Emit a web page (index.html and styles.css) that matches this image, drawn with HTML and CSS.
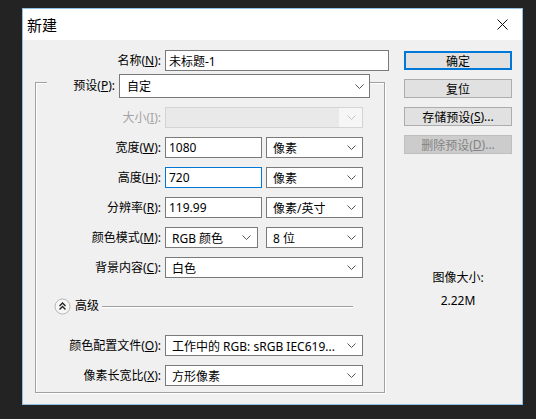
FILE: index.html
```html
<!DOCTYPE html>
<html lang="zh-CN">
<head>
<meta charset="utf-8">
<title>新建</title>
<link rel="stylesheet" href="styles.css">
</head>
<body>
<div class="dialog">
  <div class="titlebar">
    <span class="title">新建</span>
    <svg class="close" width="11" height="11" viewBox="0 0 11 11"><path d="M0.5 0.5 L10.5 10.5 M10.5 0.5 L0.5 10.5" stroke="#111" stroke-width="1" fill="none"/></svg>
  </div>
  <div class="content">
    <div class="main">
      <div class="name-row">
        <span class="lbl name-lbl">名称(<u>N</u>):</span>
        <div class="box input name-input">未标题-1</div>
      </div>
      <div class="group">
        <div class="preset-row">
          <span class="lbl preset-lbl">预设(<u>P</u>):</span>
          <div class="box select preset-sel"><span>自定</span><svg class="chev" width="9" height="5" viewBox="0 0 9 5"><polyline points="0.5,0.5 4.5,4.5 8.5,0.5" fill="none" stroke="#555" stroke-width="1"/></svg></div>
        </div>

        <div class="frow first">
          <span class="lbl disabled-lbl">大小(<u>I</u>):</span>
          <div class="box disabled w-full"><span class="dis-main"></span><span class="dd"><svg class="chev" width="9" height="5" viewBox="0 0 9 5"><polyline points="0.5,0.5 4.5,4.5 8.5,0.5" fill="none" stroke="#c4c4c4" stroke-width="1"/></svg></span></div>
        </div>

        <div class="frow">
          <span class="lbl">宽度(<u>W</u>):</span>
          <div class="box input w-num">1080</div>
          <div class="box select w-unit"><span>像素</span><svg class="chev" width="9" height="5" viewBox="0 0 9 5"><polyline points="0.5,0.5 4.5,4.5 8.5,0.5" fill="none" stroke="#555" stroke-width="1"/></svg></div>
        </div>

        <div class="frow">
          <span class="lbl">高度(<u>H</u>):</span>
          <div class="box input w-num focus">720</div>
          <div class="box select w-unit"><span>像素</span><svg class="chev" width="9" height="5" viewBox="0 0 9 5"><polyline points="0.5,0.5 4.5,4.5 8.5,0.5" fill="none" stroke="#555" stroke-width="1"/></svg></div>
        </div>

        <div class="frow">
          <span class="lbl">分辨率(<u>R</u>):</span>
          <div class="box input w-num">119.99</div>
          <div class="box select w-unit"><span>像素/英寸</span><svg class="chev" width="9" height="5" viewBox="0 0 9 5"><polyline points="0.5,0.5 4.5,4.5 8.5,0.5" fill="none" stroke="#555" stroke-width="1"/></svg></div>
        </div>

        <div class="frow">
          <span class="lbl">颜色模式(<u>M</u>):</span>
          <div class="box select w-mode"><span>RGB 颜色</span><svg class="chev" width="9" height="5" viewBox="0 0 9 5"><polyline points="0.5,0.5 4.5,4.5 8.5,0.5" fill="none" stroke="#555" stroke-width="1"/></svg></div>
          <div class="box select w-unit bits"><span>8 位</span><svg class="chev" width="9" height="5" viewBox="0 0 9 5"><polyline points="0.5,0.5 4.5,4.5 8.5,0.5" fill="none" stroke="#555" stroke-width="1"/></svg></div>
        </div>

        <div class="frow">
          <span class="lbl">背景内容(<u>C</u>):</span>
          <div class="box select w-full"><span>白色</span><svg class="chev" width="9" height="5" viewBox="0 0 9 5"><polyline points="0.5,0.5 4.5,4.5 8.5,0.5" fill="none" stroke="#555" stroke-width="1"/></svg></div>
        </div>

        <div class="adv-row">
          <svg class="adv-btn" width="17" height="17" viewBox="0 0 17 17">
            <circle cx="8.5" cy="8.5" r="7.5" fill="#f7f7f7" stroke="#b4b4b4" stroke-width="1"/>
            <polyline points="5.5,8 8.5,5 11.5,8" fill="none" stroke="#222" stroke-width="1.4"/>
            <polyline points="5.5,11.5 8.5,8.5 11.5,11.5" fill="none" stroke="#222" stroke-width="1.4"/>
          </svg>
          <span class="adv-text">高级</span>
          <span class="adv-line"></span>
        </div>

        <div class="frow profile">
          <span class="lbl">颜色配置文件(<u>O</u>):</span>
          <div class="box select w-full"><span>工作中的 RGB: sRGB IEC619...</span><svg class="chev" width="9" height="5" viewBox="0 0 9 5"><polyline points="0.5,0.5 4.5,4.5 8.5,0.5" fill="none" stroke="#555" stroke-width="1"/></svg></div>
        </div>

        <div class="frow">
          <span class="lbl">像素长宽比(<u>X</u>):</span>
          <div class="box select w-full"><span>方形像素</span><svg class="chev" width="9" height="5" viewBox="0 0 9 5"><polyline points="0.5,0.5 4.5,4.5 8.5,0.5" fill="none" stroke="#555" stroke-width="1"/></svg></div>
        </div>
      </div>
    </div>

    <div class="side">
      <div class="btn default">确定</div>
      <div class="btn">复位</div>
      <div class="btn">存储预设(<u>S</u>)...</div>
      <div class="btn disabled">删除预设(<u>D</u>)...</div>
      <div class="info">
        <div class="info-line">图像大小:</div>
        <div class="info-line size">2.22M</div>
      </div>
    </div>
  </div>
</div>
</body>
</html>
```

FILE: styles.css
```css
html, body {
  margin: 0;
  padding: 0;
}

body {
  background: #232323;
  font-family: "Noto Sans", "Noto Sans CJK SC", sans-serif;
  font-size: 12px;
  color: #000;
  height: 419px;
  overflow: hidden;
}

u {
  text-decoration: underline;
  text-underline-offset: 1px;
}

.dialog {
  width: 499px;
  margin: 8px 0 0 22px;
  border: 1px solid #8fc0e4;
  background: #f0f0f0;
}

.titlebar {
  height: 31px;
  background: #fff;
  display: flex;
  align-items: center;
  justify-content: space-between;
  padding: 0 14px 0 4px;
}

.title {
  font-size: 15px;
  line-height: 20px;
}

.close {
  display: block;
}

.content {
  display: flex;
  height: 364px;
  box-sizing: border-box;
  padding-top: 10px;
}

.main {
  width: 366px;
  flex: none;
}

.side {
  width: 108px;
  flex: none;
  margin-left: 15px;
  display: flex;
  flex-direction: column;
}

.lbl {
  display: block;
  box-sizing: border-box;
  text-align: right;
  padding-right: 4px;
  white-space: nowrap;
  line-height: 21px;
  flex: none;
}

.name-row {
  display: flex;
  height: 21px;
}

.name-lbl {
  width: 142px;
}

.box {
  box-sizing: border-box;
  height: 21px;
  border: 1px solid #7a7a7a;
  background: #fff;
  display: flex;
  align-items: center;
  white-space: nowrap;
  overflow: hidden;
  flex: none;
}

.input {
  padding-left: 3px;
}

.input.focus {
  border-color: #0078d7;
}

.select {
  padding-left: 6px;
}

.chev {
  display: block;
  margin-left: auto;
  margin-right: 6px;
  flex: none;
}

.name-input {
  width: 224px;
}

.group {
  box-sizing: border-box;
  width: 350px;
  margin: 11px 0 0 12px;
  border: 1px solid #a0a0a0;
  box-shadow: inset 1px 1px 0 #fff, 1px 1px 0 #fff;
  padding: 0 0 6px 0;
}

.preset-row {
  display: flex;
  width: 323px;
  height: 24px;
  margin: -9px 0 0 11px;
  background: #f0f0f0;
}

.preset-lbl {
  width: 72px;
  line-height: 24px;
}

.preset-sel {
  width: 251px;
  height: 24px;
  padding-left: 7px;
}

.preset-sel .chev {
  margin-right: 5px;
}

.frow {
  display: flex;
  height: 21px;
  margin-top: 9px;
}

.frow .lbl {
  width: 129px;
}

.disabled-lbl {
  color: #a3a3a3;
}

.w-full {
  width: 198px;
}

.w-num {
  width: 97px;
}

.w-unit {
  width: 97px;
  margin-left: 4px;
}

.w-mode {
  width: 93px;
}

.bits {
  margin-left: 8px;
}

.box.disabled {
  border-color: #d4d4d4;
  background: #e9e9e9;
  padding: 0;
}

.dis-main {
  flex: 1;
}

.dd {
  width: 23px;
  height: 100%;
  background: #f6f6f6;
  display: flex;
  align-items: center;
}

.dd .chev {
  margin-right: 6px;
}

.adv-row {
  display: flex;
  align-items: center;
  height: 16px;
  margin-top: 20px;
  padding-left: 18px;
}

.adv-btn {
  display: block;
  flex: none;
}

.adv-text {
  margin-left: 4px;
  line-height: 16px;
  flex: none;
}

.adv-line {
  flex: 1;
  height: 1px;
  background: #a0a0a0;
  box-shadow: 0 1px 0 #fff;
  margin: 0 31px 0 3px;
}

.profile {
  margin-top: 21px;
}

.btn {
  box-sizing: border-box;
  height: 19px;
  margin-top: 9px;
  border: 1px solid #adadad;
  background: #e1e1e1;
  display: flex;
  align-items: center;
  justify-content: center;
  white-space: nowrap;
}

.btn.default {
  margin-top: 1px;
  border: 2px solid #0078d7;
}

.btn.disabled {
  background: #cccccc;
  border-color: #bfbfbf;
  color: #838383;
}

.info {
  margin-top: 116px;
  text-align: center;
}

.info-line {
  line-height: 16px;
}

.info-line.size {
  margin-top: 7px;
}
```
